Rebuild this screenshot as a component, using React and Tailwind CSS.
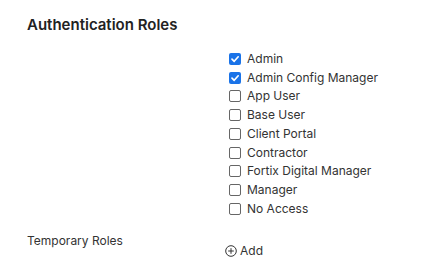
import React from "react";

const roles = [
  ["Admin", true],
  ["Admin Config Manager", true],
  ["App User", false],
  ["Base User", false],
  ["Client Portal", false],
  ["Contractor", false],
  ["Fortix Digital Manager", false],
  ["Manager", false],
  ["No Access", false],
];

function Box({ checked }) {
  if (checked) {
    return (
      <span className="flex h-[12px] w-[12px] items-center justify-center rounded-[2px] bg-[#1a73e8]">
        <svg width="10" height="10" viewBox="0 0 10 10">
          <path d="M2 5.2 L4.2 7.3 L8.2 2.8" fill="none" stroke="white" strokeWidth="1.7" strokeLinecap="round" strokeLinejoin="round" />
        </svg>
      </span>
    );
  }
  return <span className="h-[12px] w-[12px] rounded-[2px] border border-[#666] bg-white" />;
}

export default function App() {
  return (
    <div className="h-[273px] w-[437px] bg-white pl-[27px] pt-[15px] text-[#333]" style={{ fontFamily: "Inter, 'Noto Sans', sans-serif" }}>
      <h2 className="text-[15px] font-semibold leading-[20px] text-[#222]">Authentication Roles</h2>
      <div className="mt-[14.5px] flex flex-col pl-[202px]">
        {roles.map(([name, checked]) => (
          <div key={name} className="flex h-[18.75px] items-center gap-[6px]">
            <Box checked={checked} />
            <span className="text-[12px] leading-[16px]">{name}</span>
          </div>
        ))}
      </div>
      <div className="mt-[15px] flex">
        <div className="w-[198px] text-[12px] leading-[16px]">Temporary Roles</div>
        <div className="mt-[10px] flex items-center gap-[3px] text-[12px] leading-[16px]">
          <svg width="12" height="12" viewBox="0 0 12 12">
            <circle cx="6" cy="6" r="5.3" fill="none" stroke="#333" strokeWidth="1" />
            <path d="M6 3.2 V8.8 M3.2 6 H8.8" stroke="#333" strokeWidth="1" />
          </svg>
          <span>Add</span>
        </div>
      </div>
    </div>
  );
}
